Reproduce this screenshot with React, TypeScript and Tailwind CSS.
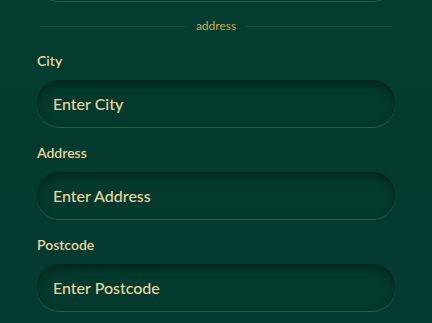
import React from "react";

const font = { fontFamily: '"Lato", "Noto Sans", sans-serif' };

function Field({ label, placeholder }: { label: string; placeholder: string }) {
  return (
    <div className="flex flex-col">
      <label className="text-[14px] leading-[16px] font-semibold text-[#e8d69c] mb-[11px]">{label}</label>
      <div className="h-[47px] rounded-[22px] bg-[#033a2d] shadow-[inset_0_5px_8px_rgba(0,20,14,0.5),0_1px_0_rgba(90,160,130,0.35)] flex items-center px-[16px]">
        <input
          placeholder={placeholder}
          className="bg-transparent outline-none w-full text-[16px] font-medium text-[#e8d7a0] placeholder:text-[#e8d7a0]"
          style={font}
        />
      </div>
    </div>
  );
}

export default function App() {
  return (
    <div
      className="w-[432px] h-[323px] overflow-hidden bg-gradient-to-b from-[#053d31] via-[#043a2e] to-[#043a32]"
      style={font}
    >
      <div className="px-[37px] flex flex-col">
        <div className="-mt-[46px] h-[47px] rounded-[22px] bg-[#043a2d] shadow-[inset_0_5px_8px_rgba(0,20,14,0.5),0_1px_0_rgba(90,160,130,0.35)]" />
        <div className="mt-[17px] flex items-center gap-[10px] px-[3px]">
          <div className="flex-1 h-px bg-[#0d4a3a]" />
          <span className="text-[12px] leading-[16px] text-[#cfa952]">address</span>
          <div className="flex-1 h-px bg-[#0d4a3a]" />
        </div>
        <div className="mt-[19px] flex flex-col gap-[18px]">
          <Field label="City" placeholder="Enter City" />
          <Field label="Address" placeholder="Enter Address" />
          <Field label="Postcode" placeholder="Enter Postcode" />
        </div>
      </div>
    </div>
  );
}
